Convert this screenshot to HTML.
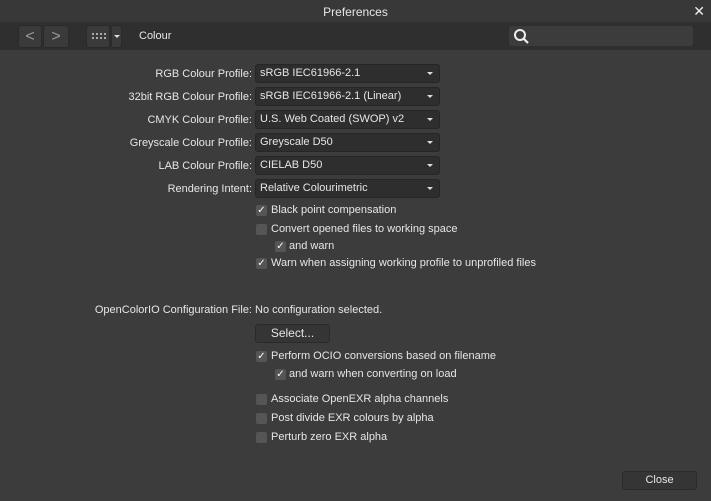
<!DOCTYPE html>
<html><head><style>
*{margin:0;padding:0;box-sizing:border-box}
body{width:711px;height:501px;background:#3c3c3c;font-family:"Liberation Sans",sans-serif;font-size:11px;color:#e6e6e6;position:relative;overflow:hidden}
.a{position:absolute;white-space:nowrap}
.title{top:0;left:0;width:711px;height:22px;background:#383838;text-align:center;line-height:24px;font-size:12px}
.tb{top:22px;left:0;width:711px;height:28px;background:#2f2f2f}
.lbl{text-align:right;right:459px}
.dd{left:255px;width:185px;height:19px;background:#2e2e2e;border:1px solid #262626;border-radius:3px;padding-left:4px;line-height:17px}
.dd:after{content:"";position:absolute;right:6px;top:7px;border-left:3px solid transparent;border-right:3px solid transparent;border-top:3px solid #ddd}
.cb{width:11px;height:11px;background:#555;border-radius:2px;color:#fff;font-size:10px;line-height:11px;text-align:center}
.btn{background:#353535;border:1px solid #2a2a2a;border-radius:3px;text-align:center}
</style></head><body>
<div class="a title">Preferences</div>
<div class="a" style="right:6px;top:3px;font-size:14px;color:#eee">✕</div>
<div class="a tb"></div>
<div class="a btn" style="left:18px;top:25px;width:24px;height:23px;background:#3a3a3a;color:#999;font-size:16px;line-height:21px">&lt;</div>
<div class="a btn" style="left:43px;top:25px;width:26px;height:23px;background:#3a3a3a;color:#999;font-size:16px;line-height:21px">&gt;</div>
<div class="a btn" style="left:86px;top:25px;width:24px;height:23px;background:#3a3a3a"><svg width="22" height="21"><g fill="#aaa"><rect x="5" y="7" width="2" height="2"/><rect x="9" y="7" width="2" height="2"/><rect x="13" y="7" width="2" height="2"/><rect x="17" y="7" width="2" height="2"/><rect x="5" y="11" width="2" height="2"/><rect x="9" y="11" width="2" height="2"/><rect x="13" y="11" width="2" height="2"/><rect x="17" y="11" width="2" height="2"/></g></svg></div>
<div class="a btn" style="left:111px;top:25px;width:11px;height:23px;background:#3a3a3a"><div style="margin:9px auto 0;width:0;border-left:3px solid transparent;border-right:3px solid transparent;border-top:3px solid #ddd"></div></div>
<div class="a" style="left:139px;top:30px">Colour</div>
<div class="a" style="left:509px;top:26px;width:184px;height:20px;background:#3c3c3c;border-radius:3px"><svg width="20" height="20" style="position:absolute;left:3px;top:1px"><circle cx="8" cy="8" r="5" stroke="#eee" stroke-width="2" fill="none"/><line x1="11.5" y1="11.5" x2="16" y2="16" stroke="#eee" stroke-width="2.2"/></svg></div>

<div class="a lbl" style="top:68px">RGB Colour Profile:</div>
<div class="a dd" style="top:64px">sRGB IEC61966-2.1</div>
<div class="a lbl" style="top:91px">32bit RGB Colour Profile:</div>
<div class="a dd" style="top:87px">sRGB IEC61966-2.1 (Linear)</div>
<div class="a lbl" style="top:114px">CMYK Colour Profile:</div>
<div class="a dd" style="top:110px">U.S. Web Coated (SWOP) v2</div>
<div class="a lbl" style="top:137px">Greyscale Colour Profile:</div>
<div class="a dd" style="top:133px">Greyscale D50</div>
<div class="a lbl" style="top:160px">LAB Colour Profile:</div>
<div class="a dd" style="top:156px">CIELAB D50</div>
<div class="a lbl" style="top:183px">Rendering Intent:</div>
<div class="a dd" style="top:179px">Relative Colourimetric</div>

<div class="a cb" style="left:256px;top:205px">✓</div><div class="a" style="left:271px;top:204px">Black point compensation</div>
<div class="a cb" style="left:256px;top:224px"></div><div class="a" style="left:271px;top:223px">Convert opened files to working space</div>
<div class="a cb" style="left:275px;top:241px">✓</div><div class="a" style="left:289px;top:240px">and warn</div>
<div class="a cb" style="left:256px;top:258px">✓</div><div class="a" style="left:271px;top:257px">Warn when assigning working profile to unprofiled files</div>

<div class="a lbl" style="top:304px">OpenColorIO Configuration File:</div>
<div class="a" style="left:255px;top:304px">No configuration selected.</div>
<div class="a btn" style="left:255px;top:324px;width:75px;height:19px;line-height:17px;font-size:12px">Select...</div>

<div class="a cb" style="left:256px;top:351px">✓</div><div class="a" style="left:271px;top:350px">Perform OCIO conversions based on filename</div>
<div class="a cb" style="left:275px;top:369px">✓</div><div class="a" style="left:289px;top:368px">and warn when converting on load</div>
<div class="a cb" style="left:256px;top:394px"></div><div class="a" style="left:271px;top:393px">Associate OpenEXR alpha channels</div>
<div class="a cb" style="left:256px;top:413px"></div><div class="a" style="left:271px;top:412px">Post divide EXR colours by alpha</div>
<div class="a cb" style="left:256px;top:432px"></div><div class="a" style="left:271px;top:431px">Perturb zero EXR alpha</div>

<div class="a btn" style="left:622px;top:471px;width:75px;height:19px;line-height:17px">Close</div>
</body></html>
